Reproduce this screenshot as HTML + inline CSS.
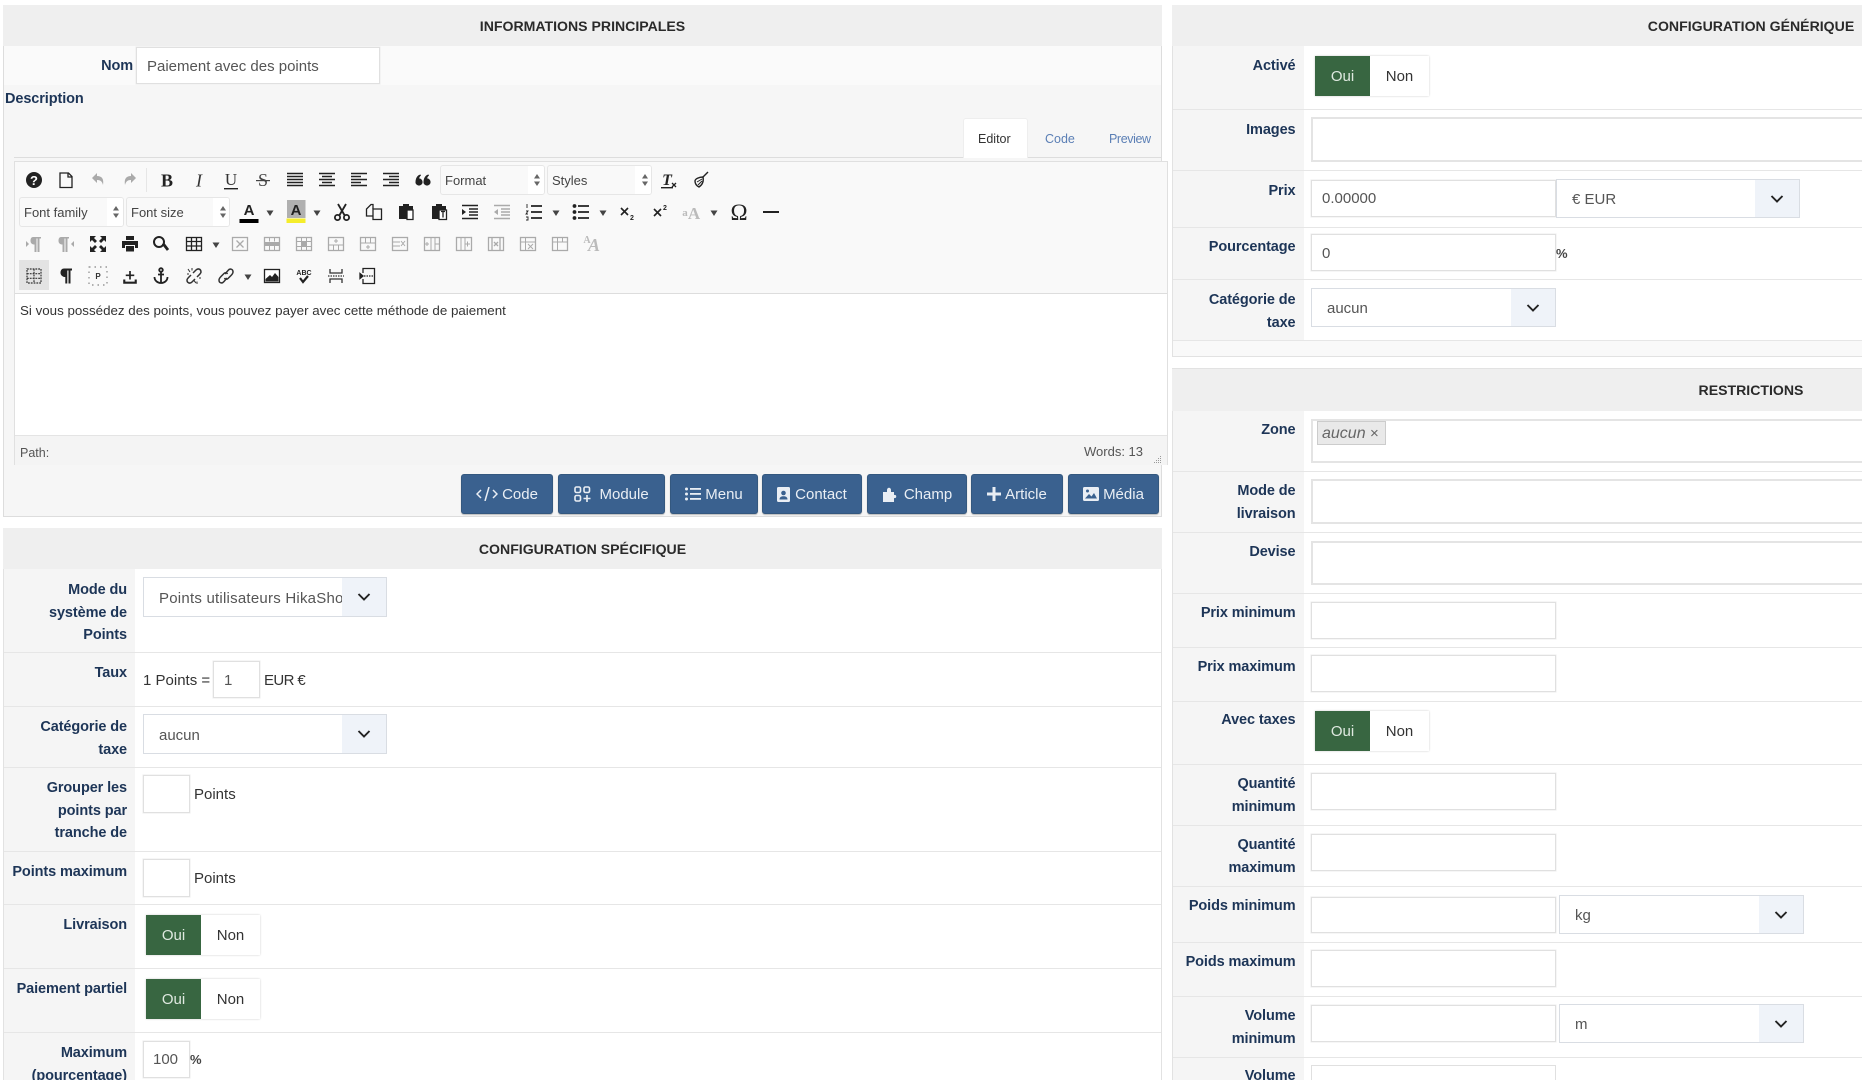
<!DOCTYPE html>
<html lang="fr"><head><meta charset="utf-8"><title>Paiement avec des points</title>
<style>
*{box-sizing:border-box}
html,body{margin:0;padding:0;width:1862px;height:1080px;overflow:hidden;background:#fff;font-family:"Liberation Sans",Arial,sans-serif;font-size:15px;color:#333}
#w{position:absolute;left:0;top:0;width:1862px;height:1080px;overflow:hidden;filter:blur(.3px)}
.a,.h,.l,.r,.i,.s,.sep,.tb,.t,.btn,.ts{position:absolute}
.h{background:#efefef;height:41px;font-weight:bold;font-size:14.1px;color:#2a2a2a;text-align:center;line-height:42px;overflow:hidden}
.h span{position:absolute;left:0;top:0;width:1158px;height:41px;text-align:center}
.sep{height:1px;background:#e6e6e6}
.l,.r{font-weight:bold;font-size:14.5px;line-height:22.6px;color:#1d3557;text-align:right;letter-spacing:-.1px;white-space:nowrap;margin-top:1px}
.l{left:3px;width:124px}
.r{left:1172px;width:123.5px}
.i{background:#fff;border:1px solid #e0e0e0;box-shadow:0 0 0 .5px #ececec}
.w2{border:2px solid #e4e4e4;border-right:0;box-shadow:none}
.s{background:#fff;border:1px solid #d9dde3;color:#555;font-size:15px;overflow:hidden}
.s b{position:absolute;right:0;top:0;bottom:0;width:44px;background:#eff3f9;font-weight:normal}
.s svg{position:absolute;right:15px;top:50%;margin-top:-5px}
.s span{position:absolute;white-space:nowrap;top:0;bottom:0;display:flex;align-items:center;padding-top:2px}
.t{white-space:nowrap;line-height:20px;font-size:15px;color:#333;margin-top:1px}
.tg{position:absolute;width:114px;height:40px;background:#fff;box-shadow:0 0 2px #ccc;font-size:15px;line-height:42px;text-align:center;color:#333}
.tg i{position:absolute;left:0;top:0;bottom:0;width:55px;background:#386641;color:#dfe9e0;font-style:normal}
.tg u{position:absolute;left:55px;right:0;text-decoration:none}
.tb{background:#f9f9f9;border:1px solid #e6e6e6;border-radius:3px;color:#444;font-size:13px;line-height:30px;padding-left:4px;white-space:nowrap;overflow:hidden}
.tb b{position:absolute;right:0;top:0;bottom:0;width:16px;background:#fff;font-weight:normal}
.btn{top:474px;height:40px;background:#3a618f;border:1px solid #34587f;border-radius:3px;color:#e9eef4;font-size:15px;display:flex;align-items:center;justify-content:center;gap:4px;box-shadow:0 1px 1px #bbb}
</style></head><body><div id="w">

<!-- LEFT PANEL 1 -->
<div class="a" style="left:3px;top:5px;width:1159px;height:512px;background:#f6f6f6;border:1px solid #ddd"></div>
<div class="h" style="left:3px;top:5px;width:1159px">INFORMATIONS PRINCIPALES</div>
<div class="a" style="left:4px;top:46px;width:1157px;height:39px;background:#fafafa"></div>
<div class="l" style="left:3px;width:130px;top:54px">Nom</div>
<div class="i" style="left:136px;top:47px;width:244px;height:37px"></div>
<div class="t" style="left:147px;top:56px;color:#555">Paiement avec des points</div>
<div class="l" style="left:5px;width:auto;top:87px;text-align:left">Description</div>

<div class="a" style="left:14px;top:157px;width:1147px;height:1px;background:#ddd"></div>
<div class="a" style="left:963px;top:118px;width:65px;height:40px;background:#fff;border:1px solid #eee;border-bottom:0;border-radius:3px 3px 0 0"></div>
<div class="t" style="left:978px;top:128px;font-size:12.5px;color:#333">Editor</div>
<div class="t" style="left:1045px;top:128px;font-size:12.5px;color:#5b7fb5">Code</div>
<div class="t" style="left:1109px;top:128px;font-size:12.5px;color:#5b7fb5;letter-spacing:-.4px">Preview</div>

<!-- editor -->
<div class="a" style="left:14px;top:161px;width:1154px;height:304px;background:#fff;border:1px solid #e0e0e0"></div>
<div class="a" style="left:15px;top:162px;width:1152px;height:132px;background:#f9f9f9;border-bottom:1px solid #ddd"></div>
<div class="a" style="left:15px;top:435px;width:1152px;height:30px;background:#f4f4f4;border-top:1px solid #e4e4e4"></div>
<div class="t" style="left:20px;top:300px;font-size:13.35px;color:#333">Si vous possédez des points, vous pouvez payer avec cette méthode de paiement</div>
<div class="t" style="left:20px;top:442px;font-size:12.5px;color:#555">Path:</div>
<div class="t" style="left:1084px;top:441px;font-size:13px;color:#555">Words: 13</div>

<div class="tb" style="left:440px;top:165px;width:105px;height:30px">Format<b></b></div>
<div class="tb" style="left:547px;top:165px;width:105px;height:30px">Styles<b></b></div>
<div class="tb" style="left:19px;top:197px;width:105px;height:30px">Font family<b></b></div>
<div class="tb" style="left:126px;top:197px;width:104px;height:30px">Font size<b></b></div>
<div class="a" style="left:19px;top:260px;width:30px;height:30px;background:#e3e3e3"></div>

<svg class="a" style="left:0;top:0" width="1200" height="480" viewBox="0 0 1200 480">
<defs>
<g id="sp"><path d="M-3-1.500 0-6 3-1.500zM-3 1.500 0 6 3 1.500z" fill="#666"/></g>
<g id="dn"><path d="M-3.500-2.500h7L0 3z" fill="#444"/></g>
<g id="tb"><rect x="-7.500" y="-6.500" width="15" height="13" fill="none" stroke="#aaa" stroke-width="1.300"/></g>
<path id="j5" d="M-8-6.500h16M-8-3.500h16M-8-.5h16M-8 2.500h16M-8 5.500h16" stroke="#222" stroke-width="1.600" fill="none"/>
</defs>
<!-- spinners -->
<use href="#sp" x="537" y="180"/><use href="#sp" x="645" y="180"/><use href="#sp" x="116" y="212"/><use href="#sp" x="223" y="212"/>

<!-- ROW 1 -->
<g transform="translate(34 180)"><circle r="8" fill="#222"/><text x="0" y="5" text-anchor="middle" font-family="Liberation Sans" font-weight="bold" font-size="13" fill="#fff">?</text></g>
<path transform="translate(66 180)" d="M-6-7H2.500L6-3.500V7.500H-6ZM2-7V-3H6" fill="none" stroke="#222" stroke-width="1.300"/>
<path transform="translate(98 180)" d="M-6-2 -1-7V-4C4-4 6-1 5 5 4 1 2 0-1 0V3Z" fill="#aaa"/>
<path transform="translate(130 180)" d="M6-2 1-7V-4C-4-4-6-1-5 5-4 1-2 0 1 0V3Z" fill="#aaa"/>
<rect x="146" y="168" width="1" height="24" fill="#e6e6e6"/>
<text x="167" y="186.500" text-anchor="middle" font-family="Liberation Serif" font-weight="bold" font-size="18" fill="#222">B</text>
<text x="199" y="186.500" text-anchor="middle" font-family="Liberation Serif" font-style="italic" font-size="18" fill="#333">I</text>
<text x="231" y="185" text-anchor="middle" font-family="Liberation Serif" font-size="17" fill="#333">U</text><rect x="224" y="188" width="14" height="1.400" fill="#222"/>
<text x="263" y="186" text-anchor="middle" font-family="Liberation Serif" font-size="18" fill="#444">S</text><rect x="256" y="180" width="14" height="1.200" fill="#444"/>
<use href="#j5" x="295" y="180"/>
<path transform="translate(327 180)" d="M-8-6.500h16M-5-3.500h10M-8-.5h16M-5 2.500h10M-8 5.500h16" stroke="#222" stroke-width="1.600"/>
<path transform="translate(359 180)" d="M-8-6.500h16M-8-3.500h10M-8-.5h16M-8 2.500h10M-8 5.500h16" stroke="#222" stroke-width="1.600"/>
<path transform="translate(391 180)" d="M-8-6.500h16M-2-3.500h10M-8-.5h16M-2 2.500h10M-8 5.500h16" stroke="#222" stroke-width="1.600"/>
<g transform="translate(423 180)" fill="#222"><circle cx="-4" cy="2" r="3.600"/><circle cx="4" cy="2" r="3.600"/><path d="M-7.400 1C-7-3-5-5-2.500-5.500L-2-4.500C-3.500-3.500-4-2-4 0ZM.6 1C1-3 3-5 5.500-5.500L6-4.500C4.500-3.500 4-2 4 0Z"/></g>
<g transform="translate(668 180)"><text x="-1" y="5" text-anchor="middle" font-family="Liberation Serif" font-style="italic" font-weight="bold" font-size="16" fill="#222">T</text><rect x="-7" y="7" width="12" height="1.400" fill="#222"/><path d="M4 3l4 4M8 3l-4 4" stroke="#222" stroke-width="1.300"/></g>
<g transform="translate(701 180)" fill="none" stroke="#222" stroke-width="1.400"><path d="M7-8 2-3"/><path d="M2-3C-2-3-6-1-6 1-6 4-4 6-2 7 1 5 3 2 2-3Z"/><path d="M-4 2 1-1M-3 5 1 1" stroke-width="1"/></g>

<!-- ROW 2 -->
<g transform="translate(249 212)"><text x="0" y="3" text-anchor="middle" font-family="Liberation Sans" font-weight="bold" font-size="15" fill="#222">A</text><rect x="-9.500" y="7" width="19" height="4" fill="#000"/></g>
<use href="#dn" x="270" y="213"/>
<rect x="287" y="200" width="18.500" height="18" fill="#b0b0b0"/>
<g transform="translate(296 212)"><text x="0" y="3" text-anchor="middle" font-family="Liberation Sans" font-weight="bold" font-size="15" fill="#222">A</text><rect x="-9.500" y="6.500" width="19" height="4.500" fill="#f5ed2b"/></g>
<use href="#dn" x="317" y="213"/>
<g transform="translate(342 212)" fill="none" stroke="#222" stroke-width="1.800"><path d="M-4-8 3 4M4-8-3 4"/><circle cx="-4.500" cy="5.500" r="2.600"/><circle cx="4.500" cy="5.500" r="2.600"/></g>
<g transform="translate(374 212)" fill="none" stroke="#222" stroke-width="1.300"><path d="M-1-3V-7.500H-3L-7.500-3V4H-1"/><path d="M-1-3H7.500V7.500H-1Z" fill="#f9f9f9"/></g>
<g transform="translate(406 212)"><path d="M-7-6H-3V-8H3V-6H7V-1H2V7H-7Z" fill="#222"/><path d="M1-2H7V7.500H1Z" fill="#fff" stroke="#222" stroke-width="1.300"/></g>
<g transform="translate(439 212)"><path d="M-7-6H-3V-8H3V-6H7V-1H1V7H-7Z" fill="#222"/><path d="M0-2H7.500V7.500H0Z" fill="#fff" stroke="#222" stroke-width="1.300"/><path d="M2-.5H6M4-.5V5.500" stroke="#222" stroke-width="1.300"/></g>
<g transform="translate(470 212)"><path d="M-8-6.500h16M-1-3h9M-1 0h9M-1 3h9M-8 6.500h16" stroke="#222" stroke-width="1.600"/><path d="M-8-3 -4 0-8 3Z" fill="#222"/></g>
<g transform="translate(502 212)"><path d="M-8-6.500h16M-1-3h9M-1 0h9M-1 3h9M-8 6.500h16" stroke="#aaa" stroke-width="1.600"/><path d="M-4-3-8 0-4 3Z" fill="#aaa"/></g>
<g transform="translate(534 212)"><path d="M-3-6h11M-3 0h11M-3 6h11" stroke="#222" stroke-width="1.800"/><path d="M-7-8v4M-8-1h2l-2 3h2M-8 5h2v3h-2" stroke="#222" stroke-width=".9" fill="none"/></g>
<use href="#dn" x="556" y="213"/>
<g transform="translate(581 212)"><path d="M-3-6h11M-3 0h11M-3 6h11" stroke="#222" stroke-width="1.800"/><circle cx="-6.500" cy="-6" r="1.900" fill="#222"/><circle cx="-6.500" cy="0" r="1.900" fill="#222"/><circle cx="-6.500" cy="6" r="1.900" fill="#222"/></g>
<use href="#dn" x="603" y="213"/>
<g transform="translate(628 212)"><path d="M-7-4 0 3M0-4-7 3" stroke="#222" stroke-width="1.600"/><text x="4" y="8" font-family="Liberation Sans" font-size="7" font-weight="bold" fill="#222" text-anchor="middle">2</text></g>
<g transform="translate(661 212)"><path d="M-7-3 0 4M0-3-7 4" stroke="#222" stroke-width="1.600"/><text x="4" y="-2" font-family="Liberation Sans" font-size="7" font-weight="bold" fill="#222" text-anchor="middle">2</text></g>
<g transform="translate(692 212)" font-family="Liberation Serif" font-weight="bold" fill="#bbb"><text x="-7" y="4" font-size="11" text-anchor="middle">a</text><text x="2" y="7" font-size="17" text-anchor="middle">A</text></g>
<use href="#dn" x="714" y="213"/>
<text x="739" y="220" text-anchor="middle" font-family="Liberation Serif" font-size="23" fill="#222">Ω</text>
<rect x="763" y="211" width="16" height="2" fill="#222"/>

<!-- ROW 3 -->
<g transform="translate(34 244)" fill="#aaa"><path d="M-1-7H7V-5.500H5.500V8H3.500V-5.500H2.500V8H.5V.5C-2 .5-3.500-1-3.500-3.300-3.500-5.500-2.500-7-1-7Z"/><path d="M-8-3-5 0-8 3Z"/></g>
<g transform="translate(66 244)" fill="#aaa"><path d="M-5-7H3V-5.500H1.500V8H-.5V-5.500H-1.500V8H-3.500V.5C-6 .5-7.500-1-7.500-3.300-7.500-5.500-6.500-7-5-7Z"/><path d="M8-3 5 0 8 3Z"/></g>
<g transform="translate(98 244)" fill="#222"><path d="M-8-8H-2L-4-6-1-3-3-1-6-4-8-2ZM8-8V-2L6-4 3-1 1-3 4-6 2-8ZM-8 8V2L-6 4-3 1-1 3-4 6-2 8ZM8 8H2L4 6 1 3 3 1 6 4 8 2Z"/></g>
<g transform="translate(130 244)" fill="#222"><rect x="-4" y="-8" width="8" height="4"/><path d="M-8-3H8V4H5V1H-5V4H-8Z"/><rect x="-4" y="2" width="8" height="5.500"/></g>
<g transform="translate(161 244)" fill="none" stroke="#222"><circle cx="-2" cy="-2" r="5" stroke-width="2"/><path d="M2-.5 7 6" stroke-width="2.800"/></g>
<g transform="translate(194 244)" fill="none" stroke="#222" stroke-width="1.300"><rect x="-7.500" y="-6.500" width="15" height="13"/><path d="M-7.500-2.500h15M-7.500 2h15M-2.500-6.500v13M2.500-6.500v13"/></g>
<use href="#dn" x="216" y="245"/>
<g transform="translate(240 244)" fill="none" stroke="#aaa" stroke-width="1.300"><use href="#tb"/><path d="M-3.500-3.500 3.500 3.500M3.500-3.500-3.500 3.500"/></g>
<g transform="translate(272 244)"><use href="#tb"/><rect x="-7" y="-2" width="14" height="4" fill="#aaa"/><path d="M-2.500-6.500v4M2.500-6.500v4M-2.500 2v4M2.500 2v4" stroke="#aaa"/></g>
<g transform="translate(304 244)"><use href="#tb"/><rect x="-3" y="-3" width="6" height="5" fill="#aaa"/><path d="M-7-2.500h14M-7 2.500h14M-2.500-6v12M2.500-6v12" stroke="#aaa"/></g>
<g transform="translate(336 244)"><use href="#tb"/><path d="M-7 1h14M-2.500 1v5.500M2.500 1v5.500M-2-3h4M0-5v4" stroke="#aaa"/></g>
<g transform="translate(368 244)"><use href="#tb"/><path d="M-7-1h14M-2.500-6v5M2.500-6v5M-2 3h4M0 1v4" stroke="#aaa"/></g>
<g transform="translate(400 244)"><use href="#tb"/><path d="M-7-2h7M-7 2h7M1-3 5 2M5-3 1 2" stroke="#aaa"/></g>
<g transform="translate(432 244)"><use href="#tb"/><path d="M-1-6v12M-7 0h4M-5-2v4M3-6v12M3 0H7" stroke="#aaa"/></g>
<g transform="translate(464 244)"><use href="#tb"/><path d="M-3-6v12M1-6v12M1 0h5M3.500-2.500v5" stroke="#aaa"/></g>
<g transform="translate(496 244)"><use href="#tb"/><path d="M-4-6v12M4-6v12M-2-2 2 2M2-2-2 2" stroke="#aaa" stroke-width="1.300"/></g>
<g transform="translate(528 244)"><use href="#tb"/><path d="M-7-2h14M-2.500-6v12M0 0 5 5M5 0 0 5" stroke="#aaa"/></g>
<g transform="translate(560 244)"><use href="#tb"/><path d="M-7-2h14M-2.500-6v12M2.500-6v4" stroke="#aaa"/></g>
<g transform="translate(592 244)" font-family="Liberation Serif" font-weight="bold" fill="#bbb"><text x="-5" y="-1" font-size="10" text-anchor="middle">A</text><text x="2" y="7" font-size="18" font-style="italic" text-anchor="middle">A</text></g>

<!-- ROW 4 -->
<g transform="translate(34 276)" fill="none" stroke="#333" stroke-width="1.200" stroke-dasharray="1.800 1"><rect x="-7" y="-7" width="14" height="14"/><path d="M-7-2.300H7M-7 2.300H7M0-7V7"/></g>
<path transform="translate(66 276)" d="M-2-7.500H6V-5.500H4.500V7.500H2.500V-5.500H1.300V7.500H-.7V1C-3.500 1-5.500-1-5.500-3.300-5.500-5.800-4-7.500-2-7.500Z" fill="#222"/>
<g transform="translate(98 276)"><rect x="-9" y="-9" width="18" height="18" fill="none" stroke="#666" stroke-width=".9" stroke-dasharray="1.500 4"/><text x="0" y="3" text-anchor="middle" font-family="Liberation Sans" font-weight="bold" font-size="8" fill="#333">P</text></g>
<g transform="translate(130 277) scale(.85)" fill="#222"><path d="M-8 3H-5.500V5.500H5.500V3H8V8H-8Z"/><path d="M-1-7H1V-3H5V-1H1V3H-1V-1H-5V-3H-1Z"/></g>
<g transform="translate(161 276)" fill="none" stroke="#222" stroke-width="1.800"><circle cx="0" cy="-6" r="1.800"/><path d="M0-4V7M-3-1.500H3M-6.500 1C-6.500 5-3 7 0 7 3 7 6.500 5 6.500 1"/></g>
<g transform="translate(194 276)" fill="none" stroke="#333" stroke-width="1.500"><path d="M-1-3 2-6C4-8 7-7 7-4 7-3 6-2 5-1L3 1M1 3-2 6C-4 8-7 7-7 4-7 3-6 2-5 1L-3-1"/><path d="M-6-7-4-4M-7-2H-5M2 7-.5 4M7 2H5M-2-8V-5.500M3 8V5.500" stroke-width="1"/></g>
<g transform="translate(226 276)" fill="none" stroke="#333" stroke-width="1.500"><path d="M-1-2 2-5.500C4-8 7-7 7-4 7-3 6.500-2 5-.5L2 2.500C.5 4-1 3-1.500 2"/><path d="M1 2-2 5.500C-4 8-7 7-7 4-7 3-6.500 2-5 .5L-2-2.500C-.5-4 1-3 1.500-2"/></g>
<use href="#dn" x="248" y="277"/>
<g transform="translate(272 276)"><rect x="-7.500" y="-6.500" width="15" height="13" fill="#fff" stroke="#222" stroke-width="1.300"/><path d="M-6.500 5.500V3L-2-1 0 1 3-3 6.500 1V5.500Z" fill="#222"/></g>
<g transform="translate(304 276)"><text x="0" y="-1" text-anchor="middle" font-family="Liberation Sans" font-weight="bold" font-size="7" fill="#222">ABC</text><path d="M-4 2-1 6 4 0" stroke="#222" stroke-width="2.200" fill="none"/></g>
<g transform="translate(336 276)" fill="none" stroke="#333" stroke-width="1.300"><path d="M-6-7V-3H6V-7M-6 7V3H6V7"/><path d="M-8 0H8" stroke-dasharray="1.500 1"/></g>
<g transform="translate(368 276)" fill="none" stroke="#222" stroke-width="1.300"><path d="M-5-3V-7.500H6.500V7.500H-5V3"/><path d="M-4 0H6.500" stroke-dasharray="1.500 1"/><path d="M-8-2.500-5 0-8 2.500Z" fill="#222"/></g>
<!-- resizer -->
<g fill="#999"><rect x="1160" y="456" width="1" height="1"/><rect x="1158" y="458" width="1" height="1"/><rect x="1160" y="458" width="1" height="1"/><rect x="1156" y="460" width="1" height="1"/><rect x="1158" y="460" width="1" height="1"/><rect x="1160" y="460" width="1" height="1"/><rect x="1154" y="462" width="1" height="1"/><rect x="1156" y="462" width="1" height="1"/><rect x="1158" y="462" width="1" height="1"/><rect x="1160" y="462" width="1" height="1"/></g>
</svg>

<!-- action buttons -->
<div class="btn" style="left:461px;width:92px"><svg width="22" height="14" viewBox="0 0 22 14" fill="none" stroke="#e9eef4" stroke-width="1.500"><path d="M5 3 1 7l4 4M17 3l4 4-4 4M13 0 9 14"/></svg>Code</div>
<div class="btn" style="left:558px;width:107px"><svg width="17" height="16" viewBox="0 0 17 16" fill="none" stroke="#e9eef4" stroke-width="1.600"><rect x="1" y="1" width="5.500" height="5.500" rx="1.500"/><rect x="10" y="1" width="5.500" height="5.500" rx="1.500"/><rect x="1" y="9.500" width="5.500" height="5.500" rx="1.500"/><path d="M13 9v7M9.500 12.500h7"/></svg>&nbsp;Module</div>
<div class="btn" style="left:670px;width:88px"><svg width="16" height="14" viewBox="0 0 16 14" fill="#e9eef4"><circle cx="1.500" cy="2" r="1.500"/><circle cx="1.500" cy="7" r="1.500"/><circle cx="1.500" cy="12" r="1.500"/><rect x="5" y="1" width="11" height="1.800"/><rect x="5" y="6" width="11" height="1.800"/><rect x="5" y="11" width="11" height="1.800"/></svg>Menu</div>
<div class="btn" style="left:762px;width:100px"><svg width="14" height="15" viewBox="0 0 14 15"><rect width="13" height="15" rx="1.500" fill="#e9eef4"/><circle cx="6.500" cy="6" r="2.300" fill="#3a618f"/><path d="M2.500 12.500C2.500 10 4.500 9.300 6.500 9.300S10.500 10 10.500 12.500Z" fill="#3a618f"/></svg>Contact</div>
<div class="btn" style="left:867px;width:100px"><svg width="18" height="16" viewBox="0 0 18 16" fill="#e9eef4"><path d="M1 6H5V4C5 1 9 1 9 4V6H12V9C15 8 15 13 12 12V16H1Z"/></svg>Champ</div>
<div class="btn" style="left:971px;width:92px"><svg width="14" height="14" viewBox="0 0 14 14" fill="#e9eef4"><path d="M5.500 0H8.500V5.500H14V8.500H8.500V14H5.500V8.500H0V5.500H5.500Z"/></svg>Article</div>
<div class="btn" style="left:1068px;width:91px"><svg width="16" height="14" viewBox="0 0 16 14"><rect width="16" height="14" rx="1.500" fill="#e9eef4"/><path d="M2 11.500 6 7l2.500 2.500L11 6l3 5.500Z" fill="#3a618f"/><circle cx="4.500" cy="4" r="1.500" fill="#3a618f"/></svg>Média</div>

<!-- LEFT PANEL 2 -->
<div class="a" style="left:3px;top:528px;width:1159px;height:552px;background:#fff;border:1px solid #e2e2e2;border-bottom:0"></div>
<div class="a" style="left:4px;top:569px;width:131px;height:511px;background:#f5f5f5"></div>
<div class="h" style="left:3px;top:528px;width:1159px">CONFIGURATION SPÉCIFIQUE</div>
<div class="sep" style="left:4px;top:652px;width:1157px"></div>
<div class="sep" style="left:4px;top:706px;width:1157px"></div>
<div class="sep" style="left:4px;top:767px;width:1157px"></div>
<div class="sep" style="left:4px;top:851px;width:1157px"></div>
<div class="sep" style="left:4px;top:904px;width:1157px"></div>
<div class="sep" style="left:4px;top:968px;width:1157px"></div>
<div class="sep" style="left:4px;top:1032px;width:1157px"></div>

<div class="l" style="top:578px">Mode du<br>système de<br>Points</div>
<div class="s" style="left:143px;top:577px;width:244px;height:40px"><span style="left:15px;width:184px;overflow:hidden;letter-spacing:.23px">Points utilisateurs HikaShop</span><b></b><svg width="14" height="10" viewBox="0 0 14 10"><path d="M1.500 2 7 7.500 12.500 2" fill="none" stroke="#222" stroke-width="1.900"/></svg></div>

<div class="l" style="top:661px">Taux</div>
<div class="t" style="left:143px;top:670px">1 Points =</div>
<div class="i" style="left:213px;top:661px;width:47px;height:37px"></div>
<div class="t" style="left:224px;top:670px;color:#555">1</div>
<div class="t" style="left:264px;top:670px;letter-spacing:-.6px">EUR €</div>

<div class="l" style="top:715px">Catégorie de<br>taxe</div>
<div class="s" style="left:143px;top:714px;width:244px;height:40px"><span style="left:15px">aucun</span><b></b><svg width="14" height="10" viewBox="0 0 14 10"><path d="M1.500 2 7 7.500 12.500 2" fill="none" stroke="#222" stroke-width="1.900"/></svg></div>

<div class="l" style="top:776px">Grouper les<br>points par<br>tranche de</div>
<div class="i" style="left:143px;top:775px;width:47px;height:38px"></div>
<div class="t" style="left:194px;top:784px">Points</div>

<div class="l" style="top:860px">Points maximum</div>
<div class="i" style="left:143px;top:859px;width:47px;height:38px"></div>
<div class="t" style="left:194px;top:868px">Points</div>

<div class="l" style="top:913px">Livraison</div>
<div class="tg" style="left:146px;top:915px"><i>Oui</i><u>Non</u></div>
<div class="l" style="top:977px">Paiement partiel</div>
<div class="tg" style="left:146px;top:979px"><i>Oui</i><u>Non</u></div>

<div class="l" style="top:1041px;height:38px;overflow:hidden">Maximum<br>(pourcentage)</div>
<div class="i" style="left:143px;top:1041px;width:47px;height:37px"></div>
<div class="t" style="left:153px;top:1049px;color:#555">100</div>
<div class="t" style="left:190px;top:1049px;font-size:13px;font-weight:bold;color:#444">%</div>

<!-- RIGHT PANEL 1 -->
<div class="a" style="left:1172px;top:5px;width:690px;height:352px;background:#fff;border:1px solid #e2e2e2;border-right:0"></div>
<div class="a" style="left:1173px;top:46px;width:131px;height:294px;background:#f5f5f5"></div>
<div class="a" style="left:1173px;top:340px;width:689px;height:16px;background:#f9f9f9"></div>
<div class="h" style="left:1172px;top:5px;width:690px"><span>CONFIGURATION GÉNÉRIQUE</span></div>
<div class="sep" style="left:1173px;top:109px;width:689px"></div>
<div class="sep" style="left:1173px;top:170px;width:689px"></div>
<div class="sep" style="left:1173px;top:227px;width:689px"></div>
<div class="sep" style="left:1173px;top:279px;width:689px"></div>
<div class="sep" style="left:1173px;top:340px;width:689px"></div>

<div class="r" style="top:54px">Activé</div>
<div class="tg" style="left:1315px;top:56px"><i>Oui</i><u>Non</u></div>
<div class="r" style="top:118px">Images</div>
<div class="i w2" style="left:1311px;top:117px;width:551px;height:45px"></div>
<div class="r" style="top:179px">Prix</div>
<div class="i" style="left:1311px;top:180px;width:245px;height:37px"></div>
<div class="t" style="left:1322px;top:188px;color:#555">0.00000</div>
<div class="s" style="left:1556px;top:179px;width:244px;height:39px"><span style="left:15px">€ EUR</span><b></b><svg width="14" height="10" viewBox="0 0 14 10"><path d="M1.500 2 7 7.500 12.500 2" fill="none" stroke="#222" stroke-width="1.900"/></svg></div>
<div class="r" style="top:235px">Pourcentage</div>
<div class="i" style="left:1311px;top:234px;width:245px;height:37px"></div>
<div class="t" style="left:1322px;top:243px;color:#555">0</div>
<div class="t" style="left:1556px;top:243px;font-size:13px;font-weight:bold;color:#444">%</div>
<div class="r" style="top:288px">Catégorie de<br>taxe</div>
<div class="s" style="left:1311px;top:288px;width:245px;height:39px"><span style="left:15px">aucun</span><b></b><svg width="14" height="10" viewBox="0 0 14 10"><path d="M1.500 2 7 7.500 12.500 2" fill="none" stroke="#222" stroke-width="1.900"/></svg></div>

<!-- RIGHT PANEL 2 -->
<div class="a" style="left:1172px;top:368px;width:690px;height:712px;background:#fff;border:1px solid #e2e2e2;border-right:0;border-bottom:0"></div>
<div class="a" style="left:1173px;top:411px;width:131px;height:669px;background:#f5f5f5"></div>
<div class="h" style="left:1172px;top:369px;width:690px;height:42px"><span style="height:42px">RESTRICTIONS</span></div>
<div class="sep" style="left:1173px;top:471px;width:689px"></div>
<div class="sep" style="left:1173px;top:532px;width:689px"></div>
<div class="sep" style="left:1173px;top:593px;width:689px"></div>
<div class="sep" style="left:1173px;top:647px;width:689px"></div>
<div class="sep" style="left:1173px;top:701px;width:689px"></div>
<div class="sep" style="left:1173px;top:764px;width:689px"></div>
<div class="sep" style="left:1173px;top:825px;width:689px"></div>
<div class="sep" style="left:1173px;top:886px;width:689px"></div>
<div class="sep" style="left:1173px;top:942px;width:689px"></div>
<div class="sep" style="left:1173px;top:996px;width:689px"></div>
<div class="sep" style="left:1173px;top:1057px;width:689px"></div>

<div class="r" style="top:418px">Zone</div>
<div class="i w2" style="left:1311px;top:419px;width:551px;height:44px"></div>
<div class="a" style="left:1317px;top:421px;width:69px;height:24px;background:#e9e9e9;border:1px solid #ccc;font-style:italic;color:#666;font-size:16px;line-height:23px;padding-left:4px;white-space:nowrap;overflow:hidden">aucun <span style="font-style:normal;font-size:15px">×</span></div>

<div class="r" style="top:479px">Mode de<br>livraison</div>
<div class="i w2" style="left:1311px;top:479px;width:551px;height:45px"></div>
<div class="r" style="top:540px">Devise</div>
<div class="i w2" style="left:1311px;top:541px;width:551px;height:44px"></div>
<div class="r" style="top:601px">Prix minimum</div>
<div class="i" style="left:1311px;top:602px;width:245px;height:37px"></div>
<div class="r" style="top:655px">Prix maximum</div>
<div class="i" style="left:1311px;top:655px;width:245px;height:37px"></div>
<div class="r" style="top:708px">Avec taxes</div>
<div class="tg" style="left:1315px;top:711px"><i>Oui</i><u>Non</u></div>
<div class="r" style="top:772px">Quantité<br>minimum</div>
<div class="i" style="left:1311px;top:773px;width:245px;height:37px"></div>
<div class="r" style="top:833px">Quantité<br>maximum</div>
<div class="i" style="left:1311px;top:834px;width:245px;height:37px"></div>
<div class="r" style="top:894px">Poids minimum</div>
<div class="i" style="left:1311px;top:897px;width:245px;height:36px"></div>
<div class="s" style="left:1559px;top:895px;width:245px;height:39px"><span style="left:15px">kg</span><b></b><svg width="14" height="10" viewBox="0 0 14 10"><path d="M1.500 2 7 7.500 12.500 2" fill="none" stroke="#222" stroke-width="1.900"/></svg></div>
<div class="r" style="top:950px">Poids maximum</div>
<div class="i" style="left:1311px;top:950px;width:245px;height:37px"></div>
<div class="r" style="top:1004px">Volume<br>minimum</div>
<div class="i" style="left:1311px;top:1005px;width:245px;height:37px"></div>
<div class="s" style="left:1559px;top:1004px;width:245px;height:39px"><span style="left:15px">m</span><b></b><svg width="14" height="10" viewBox="0 0 14 10"><path d="M1.500 2 7 7.500 12.500 2" fill="none" stroke="#222" stroke-width="1.900"/></svg></div>
<div class="r" style="top:1064px;height:15px;overflow:hidden">Volume</div>
<div class="i" style="left:1311px;top:1065px;width:245px;height:15px;border-bottom:0;box-shadow:none"></div>

</div></body></html>
